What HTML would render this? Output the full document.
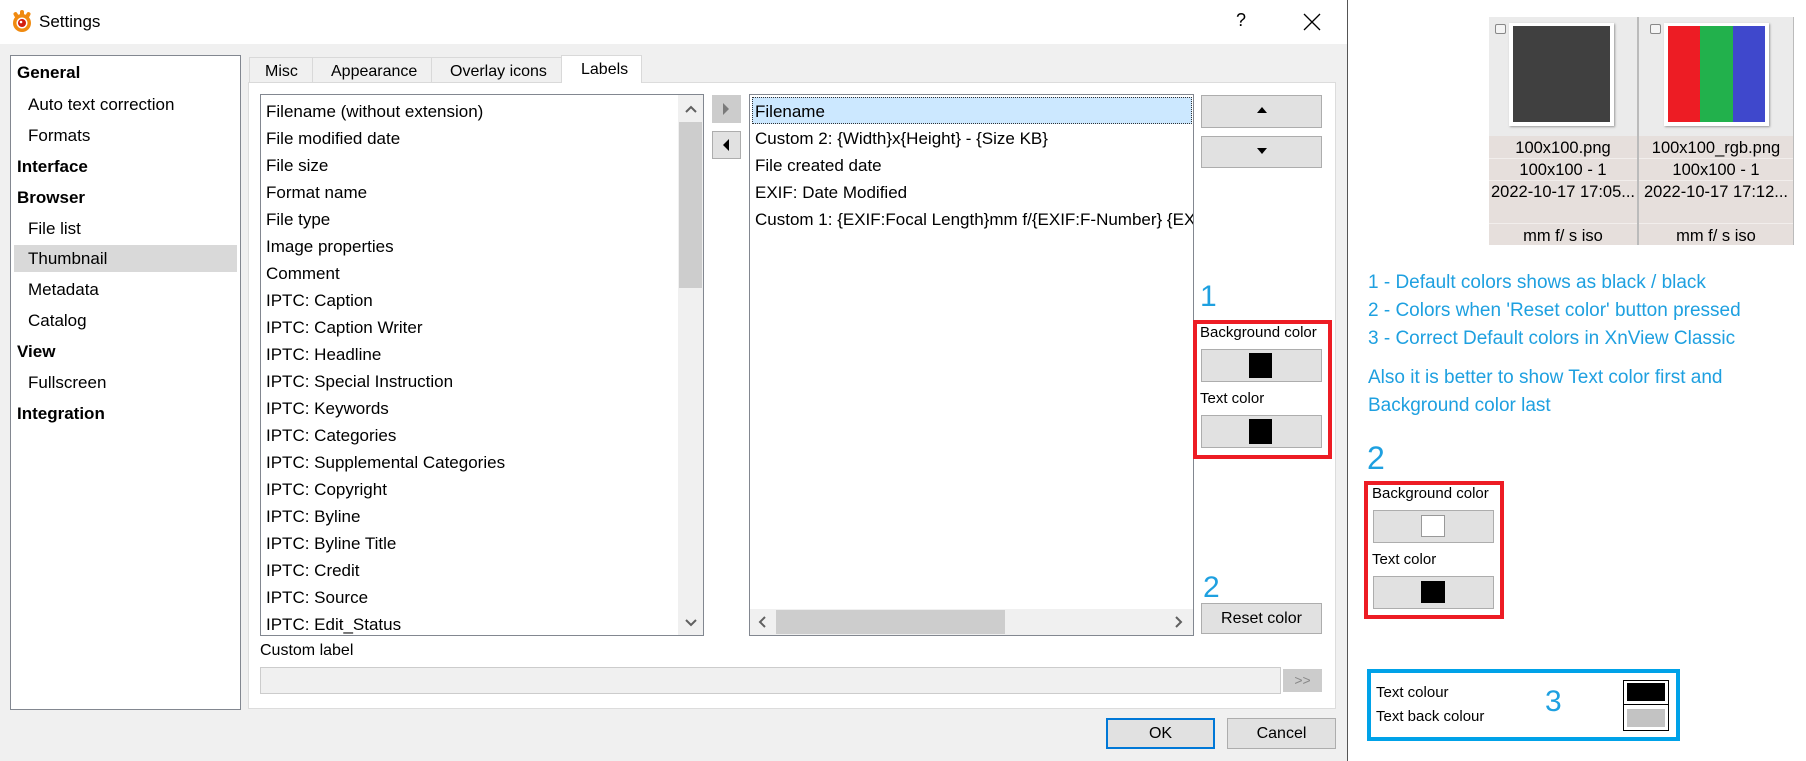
<!DOCTYPE html>
<html><head><meta charset="utf-8"><style>
*{margin:0;padding:0;box-sizing:border-box}
body{width:1806px;height:761px;position:relative;overflow:hidden;background:#fff;font-family:"Liberation Sans",sans-serif;color:#000}
.a{position:absolute;white-space:nowrap}
.t17{font-size:17px;line-height:20px}
.btn{position:absolute;background:#e1e1e1;border:1px solid #adadad}
.blue{color:#1ea0e0}
</style></head><body>
<!-- dialog -->
<div class="a" style="left:0;top:0;width:1348px;height:44px;background:#fff"></div>
<div class="a" style="left:0;top:44px;width:1348px;height:717px;background:#f0f0f0"></div>
<div class="a" style="left:1347px;top:0;width:1px;height:761px;background:#555"></div>
<svg class="a" style="left:9px;top:9px" width="26" height="26" viewBox="0 0 26 26">
<g fill="#f08a10"><circle cx="13" cy="14" r="9"/><rect x="11" y="1" width="4" height="6" rx="2"/><rect x="5" y="3" width="4" height="6" rx="2" transform="rotate(-30 7 6)"/><rect x="17" y="3" width="4" height="6" rx="2" transform="rotate(30 19 6)"/></g>
<circle cx="13" cy="14" r="5.5" fill="#fff"/><circle cx="13" cy="14" r="4" fill="#d21e10"/><circle cx="12" cy="13" r="1.3" fill="#fff"/></svg>
<div class="a" style="left:39px;top:12px;font-size:17px">Settings</div>
<div class="a" style="left:1236px;top:10px;font-size:18px">?</div>
<svg class="a" style="left:1303px;top:13px" width="18" height="18"><path d="M1 1L17 17M17 1L1 17" stroke="#000" stroke-width="1.3"/></svg>

<!-- tree -->
<div class="a" style="left:10px;top:55px;width:231px;height:655px;background:#fff;border:1px solid #828790"></div>
<div class="a" style="left:14px;top:245px;width:223px;height:27px;background:#d9d9d9"></div>
<div class="a t17" style="left:17px;top:63px;font-weight:bold">General</div>
<div class="a t17" style="left:28px;top:95px">Auto text correction</div>
<div class="a t17" style="left:28px;top:126px">Formats</div>
<div class="a t17" style="left:17px;top:157px;font-weight:bold">Interface</div>
<div class="a t17" style="left:17px;top:188px;font-weight:bold">Browser</div>
<div class="a t17" style="left:28px;top:219px">File list</div>
<div class="a t17" style="left:28px;top:249px">Thumbnail</div>
<div class="a t17" style="left:28px;top:280px">Metadata</div>
<div class="a t17" style="left:28px;top:311px">Catalog</div>
<div class="a t17" style="left:17px;top:342px;font-weight:bold">View</div>
<div class="a t17" style="left:28px;top:373px">Fullscreen</div>
<div class="a t17" style="left:17px;top:404px;font-weight:bold">Integration</div>

<!-- tabs -->
<div class="a" style="left:248px;top:82px;width:1088px;height:627px;background:#fff;border:1px solid #dcdcdc"></div>
<div class="a" style="left:249px;top:57px;width:64px;height:26px;background:#f0f0f0;border:1px solid #d9d9d9;font-size:16px;padding:5px 0 0 15px">Misc</div>
<div class="a" style="left:312px;top:57px;width:120px;height:26px;background:#f0f0f0;border:1px solid #d9d9d9;font-size:16px;padding:5px 0 0 18px">Appearance</div>
<div class="a" style="left:431px;top:57px;width:131px;height:26px;background:#f0f0f0;border:1px solid #d9d9d9;font-size:16px;padding:5px 0 0 18px">Overlay icons</div>
<div class="a" style="left:561px;top:55px;width:81px;height:28px;background:#fff;border:1px solid #d9d9d9;border-bottom:none;font-size:16px;padding:5px 0 0 19px">Labels</div>

<!-- left list -->
<div class="a" style="left:260px;top:94px;width:444px;height:542px;background:#fff;border:1px solid #828790;overflow:hidden">
<div class="a t17" style="left:5px;top:3px;line-height:27px">Filename (without extension)<br>File modified date<br>File size<br>Format name<br>File type<br>Image properties<br>Comment<br>IPTC: Caption<br>IPTC: Caption Writer<br>IPTC: Headline<br>IPTC: Special Instruction<br>IPTC: Keywords<br>IPTC: Categories<br>IPTC: Supplemental Categories<br>IPTC: Copyright<br>IPTC: Byline<br>IPTC: Byline Title<br>IPTC: Credit<br>IPTC: Source<br>IPTC: Edit_Status</div>
</div>
<div class="a" style="left:678px;top:95px;width:25px;height:540px;background:#f0f0f0"></div>
<div class="a" style="left:679px;top:122px;width:23px;height:166px;background:#cdcdcd"></div>
<svg class="a" style="left:684px;top:104px" width="14" height="10"><path d="M2 8L7 3L12 8" stroke="#606060" stroke-width="2" fill="none"/></svg>
<svg class="a" style="left:684px;top:618px" width="14" height="10"><path d="M2 2L7 7L12 2" stroke="#606060" stroke-width="2" fill="none"/></svg>

<!-- arrow buttons -->
<div class="btn" style="left:712px;top:95px;width:29px;height:28px;background:#ccc;border-color:#ccc"></div>
<svg class="a" style="left:721px;top:102px" width="10" height="14"><path d="M2 1L8 7L2 13Z" fill="#7a7a7a"/></svg>
<div class="btn" style="left:712px;top:131px;width:29px;height:28px"></div>
<svg class="a" style="left:721px;top:138px" width="10" height="14"><path d="M8 1L2 7L8 13Z" fill="#000"/></svg>

<!-- right list -->
<div class="a" style="left:749px;top:94px;width:445px;height:542px;background:#fff;border:1px solid #828790;overflow:hidden">
<div class="a" style="left:2px;top:2px;width:440px;height:27px;background:#cce8ff;border:1px dotted #333"></div>
<div class="a t17" style="left:5px;top:3px;line-height:27px">Filename<br>Custom 2: {Width}x{Height} - {Size KB}<br>File created date<br>EXIF: Date Modified<br>Custom 1: {EXIF:Focal Length}mm f/{EXIF:F-Number} {EXIF:Exposure}</div>
<div class="a" style="left:0;top:514px;width:443px;height:26px;background:#f0f0f0"></div>
<div class="a" style="left:26px;top:515px;width:229px;height:24px;background:#cdcdcd"></div>
<svg class="a" style="left:7px;top:520px" width="10" height="14"><path d="M8 2L3 7L8 12" stroke="#606060" stroke-width="2" fill="none"/></svg>
<svg class="a" style="left:424px;top:520px" width="10" height="14"><path d="M2 2L7 7L2 12" stroke="#606060" stroke-width="2" fill="none"/></svg>
</div>

<!-- up/down -->
<div class="btn" style="left:1201px;top:95px;width:121px;height:33px"></div>
<svg class="a" style="left:1256px;top:106px" width="12" height="8"><path d="M1 7L6 1L11 7Z" fill="#000"/></svg>
<div class="btn" style="left:1201px;top:136px;width:121px;height:32px"></div>
<svg class="a" style="left:1256px;top:147px" width="12" height="8"><path d="M1 1L6 7L11 1Z" fill="#000"/></svg>

<div class="a blue" style="left:1200px;top:280px;font-size:30px;line-height:34px">1</div>
<div class="a" style="left:1193px;top:320px;width:139px;height:139px;border:4px solid #ed1c24"></div>
<div class="a" style="left:1200px;top:324px;font-size:15px;line-height:18px">Background color</div>
<div class="btn" style="left:1201px;top:349px;width:121px;height:33px"></div>
<div class="a" style="left:1249px;top:353px;width:23px;height:25px;background:#000"></div>
<div class="a" style="left:1200px;top:390px;font-size:15px;line-height:18px">Text color</div>
<div class="btn" style="left:1201px;top:415px;width:121px;height:33px"></div>
<div class="a" style="left:1249px;top:419px;width:23px;height:25px;background:#000"></div>

<div class="a blue" style="left:1203px;top:571px;font-size:30px;line-height:34px">2</div>
<div class="btn" style="left:1201px;top:603px;width:121px;height:31px;font-size:16px;text-align:center;line-height:29px">Reset color</div>

<!-- custom label -->
<div class="a" style="left:260px;top:642px;font-size:16px">Custom label</div>
<div class="a" style="left:260px;top:667px;width:1021px;height:27px;background:#f0f0f0;border:1px solid #ccc"></div>
<div class="a" style="left:1283px;top:669px;width:39px;height:23px;background:#ccc;color:#888;font-size:14px;text-align:center;line-height:23px">&gt;&gt;</div>

<!-- OK cancel -->
<div class="btn" style="left:1106px;top:718px;width:109px;height:31px;border:2px solid #0078d7;font-size:16px;text-align:center;line-height:27px">OK</div>
<div class="btn" style="left:1227px;top:718px;width:109px;height:31px;font-size:16px;text-align:center;line-height:29px">Cancel</div>

<!-- right side thumbnails -->
<div class="a" style="left:1489px;top:17px;width:305px;height:228px;background:#ebebeb"></div>
<div class="a" style="left:1489px;top:136px;width:305px;height:109px;background:#e6dfdc"></div>
<div class="a" style="left:1489px;top:158px;width:305px;height:1px;background:#f2eeec"></div>
<div class="a" style="left:1489px;top:180px;width:305px;height:1px;background:#f2eeec"></div>
<div class="a" style="left:1489px;top:223px;width:305px;height:1px;background:#f2eeec"></div>
<div class="a" style="left:1637px;top:17px;width:2px;height:228px;background:#bbb"></div>
<div class="a" style="left:1793px;top:17px;width:1px;height:228px;background:#bbb"></div>
<div class="a" style="left:1495px;top:24px;width:11px;height:10px;border:1px solid #888;border-radius:2px;background:#f4f4f4"></div>
<div class="a" style="left:1650px;top:24px;width:11px;height:10px;border:1px solid #888;border-radius:2px;background:#f4f4f4"></div>
<div class="a" style="left:1509px;top:23px;width:105px;height:103px;background:#fff;box-shadow:1px 1px 2px #999"></div>
<div class="a" style="left:1513px;top:26px;width:97px;height:96px;background:#404040"></div>
<div class="a" style="left:1664px;top:23px;width:105px;height:103px;background:#fff;box-shadow:1px 1px 2px #999"></div>
<div class="a" style="left:1668px;top:26px;width:32px;height:96px;background:#ed1c24"></div>
<div class="a" style="left:1700px;top:26px;width:33px;height:96px;background:#22b14c"></div>
<div class="a" style="left:1733px;top:26px;width:32px;height:96px;background:#3f48cc"></div>
<div class="a" style="left:1484px;top:137px;width:158px;text-align:center;font-size:16.5px;line-height:22px">100x100.png<br>100x100 - 1<br>2022-10-17 17:05...<br>&nbsp;<br>mm f/ s iso</div>
<div class="a" style="left:1636px;top:137px;width:160px;text-align:center;font-size:16.5px;line-height:22px">100x100_rgb.png<br>100x100 - 1<br>2022-10-17 17:12...<br>&nbsp;<br>mm f/ s iso</div>

<div class="a blue" style="left:1368px;top:269px;font-size:19px;line-height:28px">1 - Default colors shows as black / black<br>2 - Colors when 'Reset color' button pressed<br>3 - Correct Default colors in XnView Classic</div>
<div class="a blue" style="left:1368px;top:364px;font-size:19px;line-height:28px">Also it is better to show Text color first and<br>Background color last</div>

<div class="a blue" style="left:1367px;top:440px;font-size:32px;line-height:36px">2</div>
<div class="a" style="left:1364px;top:481px;width:140px;height:138px;border:4px solid #ed1c24"></div>
<div class="a" style="left:1372px;top:485px;font-size:15px;line-height:18px">Background color</div>
<div class="btn" style="left:1373px;top:510px;width:121px;height:33px"></div>
<div class="a" style="left:1421px;top:515px;width:24px;height:22px;background:#fff;border:1px solid #999"></div>
<div class="a" style="left:1372px;top:551px;font-size:15px;line-height:18px">Text color</div>
<div class="btn" style="left:1373px;top:576px;width:121px;height:33px"></div>
<div class="a" style="left:1421px;top:581px;width:24px;height:22px;background:#000"></div>

<div class="a" style="left:1367px;top:669px;width:313px;height:72px;border:4px solid #00a2e8"></div>
<div class="a" style="left:1376px;top:684px;font-size:15px;line-height:18px">Text colour</div>
<div class="a" style="left:1376px;top:708px;font-size:15px;line-height:18px">Text back colour</div>
<div class="a blue" style="left:1545px;top:684px;font-size:30px;line-height:36px">3</div>
<div class="a" style="left:1623px;top:680px;width:46px;height:51px;border:1px solid #000;background:#fff"></div>
<div class="a" style="left:1623px;top:704px;width:46px;height:1px;background:#000"></div>
<div class="a" style="left:1627px;top:683px;width:38px;height:18px;background:#000"></div>
<div class="a" style="left:1627px;top:709px;width:38px;height:18px;background:#c3c3c3"></div>
</body></html>
